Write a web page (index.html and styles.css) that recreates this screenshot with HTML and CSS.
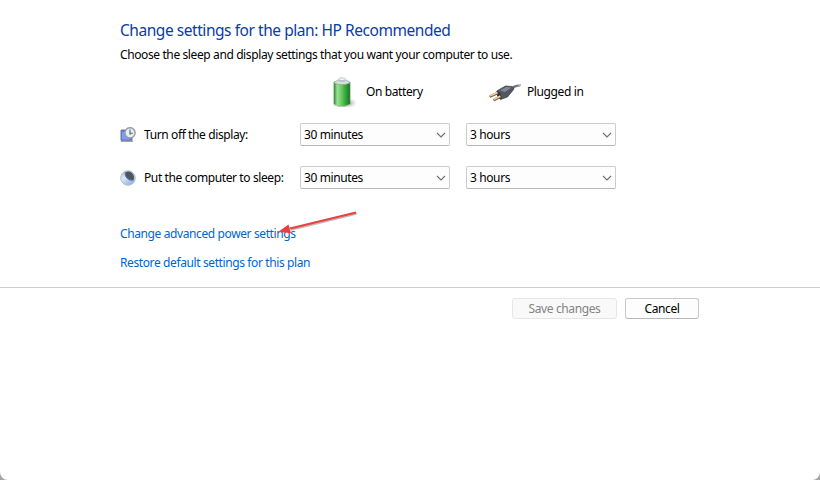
FILE: index.html
```
<!DOCTYPE html>
<html lang="en">
<head>
  <meta charset="utf-8" />
  <meta name="viewport" content="width=device-width,initial-scale=1" />
  <title>Edit Plan Settings</title>
  <link rel="stylesheet" href="styles.css">
</head>

<body>
  <div class="window">
    <main class="content">
      <h1>Change settings for the plan: HP Recommended</h1>
      <p class="intro">Choose the sleep and display settings that you want your computer to use.</p>

      <div class="plan-grid">
        <div class="col-head battery">
          <svg width="28" height="34" viewBox="0 0 28 34">
            <defs>
              <linearGradient id="cell" x1="0" x2="1">
                <stop offset="0" stop-color="#2c8a32"/>
                <stop offset=".2" stop-color="#9be292"/>
                <stop offset=".45" stop-color="#6ccb66"/>
                <stop offset=".75" stop-color="#2fa236"/>
                <stop offset="1" stop-color="#1d7525"/>
              </linearGradient>
              <radialGradient id="shade">
                <stop offset="0" stop-color="#777" stop-opacity=".6"/>
                <stop offset="1" stop-color="#999" stop-opacity="0"/>
              </radialGradient>
            </defs>
            <ellipse cx="18" cy="28" rx="8" ry="5" fill="url(#shade)"/>
            <path d="M3 7v22.500q8 4 16 0v-22.500z" fill="url(#cell)" stroke="#4d8a4e" stroke-width=".7"/>
            <path d="M3.100 29.500q7.900 4 15.800 0" fill="none" stroke="#b4d2b2"/>
            <path d="M3 8q0-1.500 4.500-3h7q4.500 1.500 4.500 3-8 3.500-16 0z" fill="#d5e2d9" stroke="#8d9991" stroke-width=".6"/>
            <path d="M7.500 4.300v2q3.500 1.500 7 0v-2z" fill="#b8c2c6"/>
            <ellipse cx="11" cy="4.200" rx="3.500" ry="1.500" fill="#eef2f4" stroke="#a1abb0" stroke-width=".6"/>
          </svg>
          <span>On battery</span>
        </div>
        <div class="col-head plugged">
          <svg width="34" height="20" viewBox="0 0 34 20">
            <path d="M22 6q4-4 11-3.500l-1 2q-5 0-8 4z" fill="#70747b"/>
            <path d="M29 2.800l4-.3-.8 1.800z" fill="#b9bdc2"/>
            <path d="M9.500 8.500l8-4.500 6.500.5 2 2.500-6.500 8-7 2.500-3-4z" fill="#525762" stroke="#3b4049" stroke-width=".7"/>
            <path d="M12 8.500l6-3.500 5.500.5-6.500 4.500z" fill="#838995"/>
            <path d="M9 8.500l3 2.300 2 6-2.500.2-4-6z" fill="#30353f"/>
            <path d="M9.500 11l-7.500 3.500M12.500 14.500l-6.500 3.500" stroke="#8b6749" stroke-width="2.800"/>
            <path d="M9.500 10.500l-7.500 3.400M12.300 14.100l-6.300 3.200" stroke="#f5d6a2" stroke-width="1.500"/>
            <path d="M1.500 13.700l.8 1.700M5.500 17.300l.8 1.700" stroke="#6b5542" stroke-width=".8"/>
          </svg>
          <span>Plugged in</span>
        </div>

        <div class="row-label">
          <svg width="16" height="16" viewBox="0 0 16 16">
            <path d="M1 3h11v10.500H1z" fill="#5874e6" stroke="#767d95"/>
            <path d="M2 5h4l4 7.500H2z" fill="#829bf8"/>
            <path d="M1 14.300h12" stroke="#9b9faa" stroke-width="1.300"/>
            <circle cx="10" cy="5.800" r="5.100" fill="#e8f0f4" stroke="#969da3" stroke-width="1.500"/>
            <path d="M10 2.500v3.800h2.800M10 6.300v1.500" fill="none" stroke="#466578" stroke-width="1.100"/>
          </svg>
          <span>Turn off the display:</span>
        </div>
        <button class="select"><span>30 minutes</span><svg class="chevron" viewBox="0 0 10 6"><path d="M1 1l4 4 4-4"/></svg></button>
        <button class="select"><span>3 hours</span><svg class="chevron" viewBox="0 0 10 6"><path d="M1 1l4 4 4-4"/></svg></button>

        <div class="row-label">
          <svg width="16" height="16" viewBox="0 0 16 16">
            <defs>
              <linearGradient id="moon" x1="0" y1="0" x2=".6" y2="1">
                <stop offset="0" stop-color="#a4aeb8"/>
                <stop offset=".45" stop-color="#dceafa"/>
                <stop offset="1" stop-color="#8fb5e6"/>
              </linearGradient>
            </defs>
            <circle cx="8" cy="8" r="7.300" fill="url(#moon)" stroke="#b9bfc5"/>
            <path d="M5 2.500q4-2 7 .5t1.500 7q-3 1.500-6-1T5 2.500z" fill="#4e5664"/>
            <path d="M5 2.500q-.5 7 8.300 8" fill="none" stroke="#6488bd" stroke-width=".8"/>
          </svg>
          <span>Put the computer to sleep:</span>
        </div>
        <button class="select"><span>30 minutes</span><svg class="chevron" viewBox="0 0 10 6"><path d="M1 1l4 4 4-4"/></svg></button>
        <button class="select"><span>3 hours</span><svg class="chevron" viewBox="0 0 10 6"><path d="M1 1l4 4 4-4"/></svg></button>
      </div>

      <nav class="links">
        <a href="#">Change advanced power settings</a>
        <a href="#">Restore default settings for this plan</a>
      </nav>
    </main>

    <footer class="actions">
      <button class="btn save" disabled>Save changes</button>
      <button class="btn cancel">Cancel</button>
    </footer>

    <svg class="arrow" width="84" height="28" viewBox="0 0 84 28">
      <path class="arrow-shadow" d="M79.500 5.500L14 21.500"/>
      <path class="arrow-line" d="M79 4.500L13 20.500"/>
      <path class="arrow-head" d="M1 24L11.500 16.500l2.500 8.500z"/>
    </svg>
  </div>
</body>
</html>
```
FILE: styles.css
```
:root{
  --link:#0066cc;
  --title:#0a3ca5;
  --border:#cccccc;
}

*{ box-sizing:border-box; }

html,body{ height:100%; }
body{
  margin:0; overflow:hidden;
  background:#a3a3a3; color:#000;
  font:12px/16px "Noto Sans","Open Sans",sans-serif;
  letter-spacing:-.39px; white-space:nowrap;
}

.window{
  position:relative; height:100%;
  background:#fff; border-radius:0 0 8px 8px;
}

.content{
  height:288px; padding:20px 0 0 120px;
  border-bottom:1px solid var(--border);
}

h1{
  margin:0; font-size:15.5px; line-height:21px; font-weight:400;
  color:var(--title); letter-spacing:-.45px;
}
.intro{ margin:6px 0 0; }

/* labels on the left, one column for each power source */
.plan-grid{
  display:grid;
  grid-template-columns:164px 150px 150px;
  grid-template-rows:42px 43px 43px;
  column-gap:16px;
  align-items:center;
  margin-top:8px;
}
.plan-grid svg{ flex-shrink:0; }

.col-head{ display:flex; align-items:center; }
.battery{ grid-column:2; padding-left:31px; gap:7px; }
.plugged{ padding-left:22px; gap:5px; }

.row-label{ display:flex; align-items:center; gap:8px; }

.select{
  display:flex; align-items:center; justify-content:space-between;
  height:23px; padding:0 3px;
  border:1px solid var(--border); border-bottom-color:#b8b8b8; border-radius:2px;
  background:#fdfdfd; color:#000;
  font:inherit; letter-spacing:inherit;
}
.chevron{ width:10px; height:6px; fill:none; stroke:#707070; stroke-width:1.1; }

.links{
  display:flex; flex-direction:column; align-items:flex-start; gap:13px;
  margin-top:27px;
}
.links a{ color:var(--link); text-decoration:none; }

.actions{ display:flex; gap:8px; padding:10px 0 0 512px; }
.btn{
  height:21px; padding:0;
  border:1px solid #c8c8c8; border-bottom-color:#b8b8b8; border-radius:3px;
  background:#fdfdfd; color:#000;
  font:inherit; line-height:19px; letter-spacing:inherit;
}
.save{ width:105px; }
.cancel{ width:74px; }
.btn:disabled{ background:#f9f9f9; border-color:#e6e6e6; color:#838383; }

/* pointer laid over the advanced settings link */
.arrow{ position:absolute; left:277px; top:208px; fill:none; }
.arrow-line{ stroke:#e8413f; stroke-width:2.2; }
.arrow-shadow{ stroke:#777; stroke-opacity:.5; stroke-width:2.5; }
.arrow-head{ fill:#ef3f3d; }
```
